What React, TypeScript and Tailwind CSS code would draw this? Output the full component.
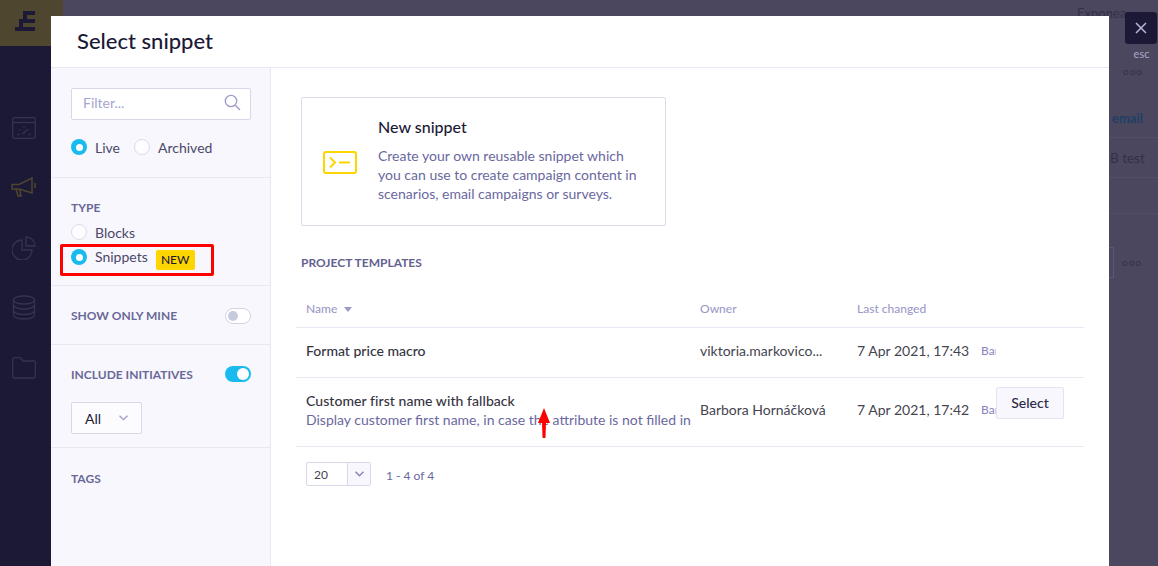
import React from "react";

const font = { fontFamily: "Lato, 'Open Sans', sans-serif" };

function Radio({ on }: { on?: boolean }) {
  return on ? (
    <span className="w-4 h-4 rounded-full bg-[#19bbef] flex items-center justify-center shrink-0">
      <span className="w-[7px] h-[7px] rounded-full bg-white" />
    </span>
  ) : (
    <span className="w-4 h-4 rounded-full border border-[#dcdcef] bg-white/70 shrink-0" />
  );
}

function Toggle({ on }: { on?: boolean }) {
  return on ? (
    <span className="w-[26px] h-4 rounded-full bg-[#19bbef] flex items-center justify-end px-[2px]">
      <span className="w-3 h-3 rounded-full bg-white" />
    </span>
  ) : (
    <span className="w-[26px] h-4 rounded-full bg-white border border-[#d3d3e6] flex items-center px-[2px]">
      <span className="w-[10px] h-[10px] rounded-full bg-[#c8cbe0]" />
    </span>
  );
}

const rail = "#36334f";

export default function App() {
  return (
    <div className="relative w-[1158px] h-[566px] overflow-hidden bg-[#4b475e] flex" style={font}>
      {/* app rail */}
      <div className="w-[51px] h-full bg-[#1c1936] flex flex-col items-center pr-[3px] shrink-0">
        <div className="w-[63px] h-[46px] shrink-0 bg-[#4f4630] pl-[15px] pt-[11px] self-start">
          <svg width="20" height="20" viewBox="0 0 20 20" fill="#1c1936">
            <rect x="8" y="0" width="12" height="4" />
            <rect x="8" y="0" width="4" height="8" />
            <rect x="4" y="8" width="16" height="4" />
            <rect x="4" y="8" width="4" height="8" />
            <rect x="0" y="16" width="20" height="4" />
          </svg>
        </div>
        <svg className="mt-[71px] shrink-0" width="24" height="22" viewBox="0 0 24 22" fill="none" stroke={rail} strokeWidth="1.300">
          <rect x="0.700" y="0.700" width="22.600" height="20.600" rx="1.500" />
          <path d="M1 5.500h22" />
          <path d="M5.500 17.500h2M16.500 17.500h2M7.500 12.500l1 1M16.500 12.500l-1 1M12 9.500v1.500M10.500 17.500a2 2 0 0 1 2-2l2-3" />
        </svg>
        <svg className="mt-[38px] shrink-0" width="26" height="20" viewBox="0 0 26 20" fill="none" stroke="#4f4630" strokeWidth="1.500">
          <path d="M1 7.500h7L21 1v15L8 12H1z" />
          <path d="M5 12l2 7h3l-1.500-6.500M24 6v5" />
        </svg>
        <svg className="mt-[39px] shrink-0" width="24" height="24" viewBox="0 0 24 24" fill="none" stroke={rail} strokeWidth="1.300">
          <path d="M10 4a10 10 0 1 0 10 10H10z" />
          <path d="M14 1a9 9 0 0 1 9 9h-9z" />
        </svg>
        <svg className="mt-[35px] shrink-0" width="24" height="25" viewBox="0 0 24 25" fill="none" stroke={rail} strokeWidth="1.300">
          <ellipse cx="12" cy="5" rx="10.500" ry="4" />
          <path d="M1.500 5v15c0 2.200 4.700 4 10.500 4s10.500-1.800 10.500-4V5M1.500 10c0 2.200 4.700 4 10.500 4s10.500-1.800 10.500-4M1.500 15.500c0 2.200 4.700 4 10.500 4s10.500-1.800 10.500-4" />
        </svg>
        <svg className="mt-[37px] shrink-0" width="24" height="22" viewBox="0 0 24 22" fill="none" stroke={rail} strokeWidth="1.300">
          <path d="M0.700 2.200A1.500 1.500 0 0 1 2.200.7h6l3 3.300h10.600a1.500 1.500 0 0 1 1.500 1.500v14a1.500 1.500 0 0 1-1.500 1.500H2.200a1.500 1.500 0 0 1-1.500-1.500z" />
        </svg>
      </div>

      {/* dimmed page behind the modal, only its right edge shows */}
      <div className="flex-1 relative">
        <span className="absolute left-[1026px] top-[4px] text-[13px] text-[#33304a]">Exponea</span>
        <span className="absolute left-[1072px] top-[64px] text-[#33304a] tracking-[1px] text-[10px]">ooo</span>
        <span className="absolute left-[1061px] top-[109px] text-[13px] font-bold text-[#1f3f66]">email</span>
        <span className="absolute left-[1059px] top-[148px] text-[13.500px] text-[#33304a]">B test</span>
        <div className="absolute left-[1058px] top-[137px] w-[49px] h-px bg-[#524e66]" />
        <div className="absolute left-[1058px] top-[177px] w-[49px] h-px bg-[#524e66]" />
        <div className="absolute left-[1058px] top-[213px] w-[49px] h-px bg-[#524e66]" />
        <div className="absolute left-[1058px] top-[247px] w-[5px] h-[31px] border border-l-0 border-[#5b5772]" />
        <span className="absolute left-[1071px] top-[255px] text-[#33304a] tracking-[1px] text-[10px]">ooo</span>
      </div>

      {/* modal */}
      <div className="absolute left-[51px] top-4 w-[1058px] h-[550px] bg-white flex flex-col">
        <div className="h-[52px] shrink-0 border-b border-[#e8e8f3] flex items-center pl-[26px]">
          <h1 className="text-[22px] font-medium text-[#1c1936] leading-none pb-[2px]">Select snippet</h1>
        </div>
        <div className="flex-1 flex min-h-0">
          {/* filters */}
          <aside className="w-[220px] shrink-0 bg-[#f7f7fd] border-r border-[#e8e8f3] flex flex-col text-[14px] text-[#4b4868]">
            <div className="h-[110px] border-b border-[#e8e8f3] pl-5 pr-[19px] pt-5 shrink-0">
              <div className="h-8 border border-[#d8d8ea] rounded-[2px] bg-white flex items-center justify-between pl-[11px] pr-[9px] pb-[1px]">
                <span className="text-[#a7a5cf] text-[14px] pb-[3px]">Filter...</span>
                <svg className="mb-[2px]" width="17" height="17" viewBox="0 0 17 17" fill="none" stroke="#9d9bc8" strokeWidth="1.300">
                  <circle cx="7" cy="7" r="5.700" />
                  <path d="M11.200 11.200L16 16" />
                </svg>
              </div>
              <div className="flex items-center mt-[19px] h-4">
                <Radio on />
                <span className="ml-2">Live</span>
                <span className="ml-[14px] flex"><Radio /></span>
                <span className="ml-2">Archived</span>
              </div>
            </div>
            <div className="h-[108px] border-b border-[#e8e8f3] pl-5 pr-[19px] shrink-0 relative">
              <div className="text-[12px] font-bold text-[#6a6898] mt-[23px] leading-[14px]">TYPE</div>
              <div className="flex items-center mt-[9px] h-4">
                <Radio />
                <span className="ml-2">Blocks</span>
              </div>
              <div className="flex items-center mt-[9px] h-4">
                <Radio on />
                <span className="ml-2 -mt-[2px]">Snippets</span>
                <span className="ml-2 mt-[5px] h-5 w-[39px] rounded-[2px] bg-[#ffd500] text-[#1c1936] text-[12px] font-medium flex items-center justify-center">NEW</span>
              </div>
              <div className="absolute left-[9px] top-[66px] w-[154px] h-[32px] border-[3px] border-[#ff0000] rounded-[2px]" />
            </div>
            <div className="h-[59px] border-b border-[#e8e8f3] pl-5 pr-[19px] pt-[1px] flex items-center justify-between shrink-0">
              <span className="text-[12px] font-bold text-[#6a6898]">SHOW ONLY MINE</span>
              <Toggle />
            </div>
            <div className="h-[103px] border-b border-[#e8e8f3] pl-5 pr-[19px] pt-[21px] shrink-0">
              <div className="flex items-center justify-between h-4">
                <span className="text-[12px] font-bold text-[#6a6898] pt-[2px]">INCLUDE INITIATIVES</span>
                <Toggle on />
              </div>
              <div className="mt-[20px] w-[71px] h-[32px] border border-[#d8d8ea] rounded-[2px] bg-white/60 flex items-center pl-[13px] gap-[18px]">
                <span className="text-[#1c1936]">All</span>
                <svg width="9" height="6" viewBox="0 0 9 6" fill="none" stroke="#9d9bc8" strokeWidth="1.300">
                  <path d="M0.500 0.700L4.500 4.700L8.500 0.700" />
                </svg>
              </div>
            </div>
            <div className="px-5 pt-6 text-[12px] font-bold text-[#6a6898] leading-[14px]">TAGS</div>
          </aside>

          {/* main */}
          <main className="flex-1 min-w-0 pl-[25px] pr-[25px]">
            <div className="ml-[5px] mt-[29px] w-[365px] h-[129px] border border-[#dcdcec] rounded-[2px] flex">
              <div className="w-[76px] shrink-0 flex items-center pl-[21px] pt-[1px]">
                <svg width="34" height="23" viewBox="0 0 34 23" fill="none" stroke="#ffd500" strokeWidth="2">
                  <rect x="1" y="1" width="32" height="21" rx="2" />
                  <path d="M7 6.500L12 11.500L7 16.500M16 11.500H27" />
                </svg>
              </div>
              <div className="pt-[19px]">
                <div className="text-[16px] font-medium text-[#1c1936] leading-5">New snippet</div>
                <p className="mt-[9px] text-[14px] leading-[19px] text-[#6a68a0] w-[270px]">
                  Create your own reusable snippet which you can use to create campaign content in scenarios, email campaigns or surveys.
                </p>
              </div>
            </div>
            <div className="ml-[5px] mt-[30px] text-[12px] font-bold text-[#63618f] leading-[14px]">PROJECT TEMPLATES</div>

            <div className="mt-[25px] w-[788px] text-[14px]">
              <div className="h-[33px] flex items-center border-b border-[#e8e8f3] text-[12px] font-medium text-[#9c9ac8] pb-[4px]">
                <div className="w-[404px] pl-[10px] flex items-center gap-[7px]">
                  Name
                  <svg width="8" height="5" viewBox="0 0 8 5" fill="#9c9ac8"><path d="M0 0h8L4 5z" /></svg>
                </div>
                <div className="w-[157px]">Owner</div>
                <div>Last changed</div>
              </div>
              <div className="h-[50px] flex items-center border-b border-[#e8e8f3] text-[#45444f] pb-[4px]">
                <div className="w-[404px] pl-[10px] font-medium text-[#35343f]">Format price macro</div>
                <div className="w-[157px]">viktoria.markovico...</div>
                <div className="w-[124px]">7 Apr 2021, 17:43</div>
                <div className="w-[15px] overflow-hidden whitespace-nowrap text-[12px] text-[#8583bd]">Barbora</div>
              </div>
              <div className="h-[69px] flex items-center border-b border-[#e8e8f3] text-[#45444f] relative pb-[5px]">
                <div className="w-[404px] pl-[10px] pr-[10px] whitespace-nowrap overflow-hidden">
                  <div className="font-medium leading-[19px] text-[#35343f] tracking-[0.060px]">Customer first name with fallback</div>
                  <div className="text-[#6a68a0] leading-[19px]">Display customer first name, in case the attribute is not filled in</div>
                </div>
                <div className="w-[157px]">Barbora Hornáčková</div>
                <div className="w-[124px]">7 Apr 2021, 17:42</div>
                <div className="w-[15px] overflow-hidden whitespace-nowrap text-[12px] text-[#8583bd]">Barbora</div>
                <button className="w-[68px] h-8 self-start mt-[9px] pb-[2px] bg-[#f7f7fd] border border-[#e4e4f2] rounded-[2px] text-[14px] font-medium text-[#2a2845]">Select</button>
                <svg className="absolute left-[242px] top-[30px]" width="12" height="30" viewBox="0 0 12 30" fill="#ff0000">
                  <path d="M6 0L12 15H8L7.500 29a1.500 1.500 0 0 1-3 0L4 15H0z" />
                </svg>
              </div>
              <div className="flex items-center mt-[15px] ml-[10px]">
                <div className="w-[65px] h-6 border border-[#d8d8ea] rounded-[2px] flex text-[12px] text-[#45444f]">
                  <span className="flex-1 pl-[7px] leading-[23px]">20</span>
                  <span className="w-[23px] border-l border-[#d8d8ea] bg-[#f7f7fd] flex items-center justify-center">
                    <svg width="9" height="6" viewBox="0 0 9 6" fill="none" stroke="#8583bd" strokeWidth="1.400">
                      <path d="M0.500 0.700L4.500 4.700L8.500 0.700" />
                    </svg>
                  </span>
                </div>
                <span className="ml-[15px] text-[12px] text-[#6a68a0] pt-[3px]">1 - 4 of 4</span>
              </div>
            </div>
          </main>
        </div>
      </div>

      {/* close */}
      <div className="absolute left-[1125px] top-3 flex flex-col items-center w-8">
        <div className="w-8 h-8 bg-[#1c1936] rounded-[3px] flex items-center justify-center">
          <svg width="12" height="12" viewBox="0 0 12 12" fill="none" stroke="#b9b8d8" strokeWidth="1.500">
            <path d="M1 1L11 11M11 1L1 11" />
          </svg>
        </div>
        <span className="text-[11px] text-[#a9a7cc] mt-[2px] leading-[16px] ml-[1px]">esc</span>
      </div>
    </div>
  );
}
